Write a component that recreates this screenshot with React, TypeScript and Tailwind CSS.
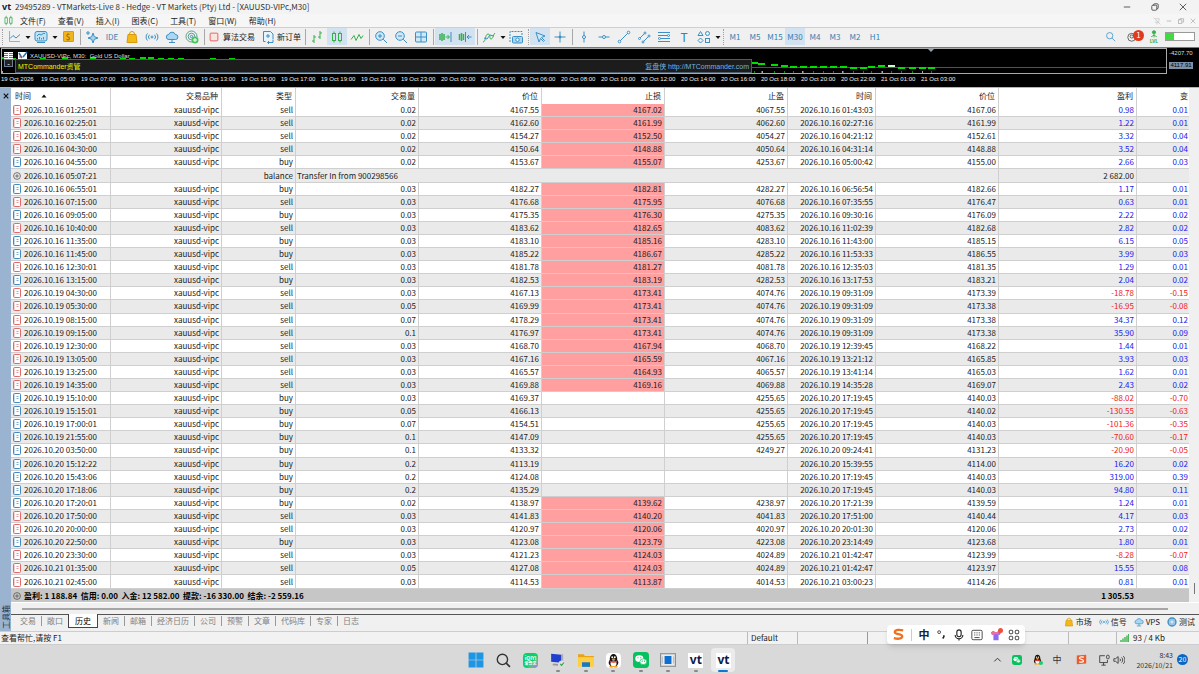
import React from 'react'

type Row = {
  open: string
  side: string
  volume: string
  price: string
  sl: string
  hit: boolean
  tp: string
  close: string
  closePrice: string
  profit: string
  change: string
}

const RAW = `
10.16 01:25:01|sell|0.02|4167.55|4167.02|4067.55|10.16 01:43:03|4167.06|0.98|0.01
10.16 02:25:01|sell|0.02|4162.60|4161.99|4062.60|10.16 02:27:16|4161.99|1.22|0.01
10.16 03:45:01|sell|0.02|4154.27|4152.50|4054.27|10.16 04:21:12|4152.61|3.32|0.04
10.16 04:30:00|sell|0.02|4150.64|4148.88|4050.64|10.16 04:31:14|4148.88|3.52|0.04
10.16 04:55:00|buy|0.02|4153.67|4155.07|4253.67|10.16 05:00:42|4155.00|2.66|0.03
10.16 05:07:21|balance|Transfer In from 900298566|||||| 2 682.00|
10.16 06:55:01|buy|0.03|4182.27|4182.81|4282.27|10.16 06:56:54|4182.66|1.17|0.01
10.16 07:15:00|sell|0.03|4176.68|4175.95|4076.68|10.16 07:35:55|4176.47|0.63|0.01
10.16 09:05:00|buy|0.03|4175.35|4176.30|4275.35|10.16 09:30:16|4176.09|2.22|0.02
10.16 10:40:00|sell|0.03|4183.62|4182.65|4083.62|10.16 11:02:39|4182.68|2.82|0.02
10.16 11:35:00|buy|0.03|4183.10|4185.16|4283.10|10.16 11:43:00|4185.15|6.15|0.05
10.16 11:45:00|buy|0.03|4185.22|4186.67|4285.22|10.16 11:53:33|4186.55|3.99|0.03
10.16 12:30:01|sell|0.03|4181.78|4181.27|4081.78|10.16 12:35:03|4181.35|1.29|0.01
10.16 13:15:00|buy|0.03|4182.53|4183.19|4282.53|10.16 13:17:53|4183.21|2.04|0.02
10.19 04:30:00|sell|0.03|4167.13|4173.41|4074.76|10.19 09:31:09|4173.39|-18.78|-0.15
10.19 05:30:00|sell|0.05|4169.99|4173.41|4074.76|10.19 09:31:09|4173.38|-16.95|-0.08
10.19 08:15:00|sell|0.07|4178.29|4173.41|4074.76|10.19 09:31:09|4173.38|34.37|0.12
10.19 09:15:00|sell|0.1|4176.97|4173.41|4074.76|10.19 09:31:09|4173.38|35.90|0.09
10.19 12:30:00|sell|0.03|4168.70|4167.94|4068.70|10.19 12:39:45|4168.22|1.44|0.01
10.19 13:05:00|sell|0.03|4167.16|4165.59|4067.16|10.19 13:21:12|4165.85|3.93|0.03
10.19 13:25:00|sell|0.03|4165.57|4164.93|4065.57|10.19 13:41:14|4165.03|1.62|0.01
10.19 14:35:00|sell|0.03|4169.88|4169.16|4069.88|10.19 14:35:28|4169.07|2.43|0.02
10.19 15:10:00|buy|0.03|4169.37||4255.65|10.20 17:19:45|4140.03|-88.02|-0.70
10.19 15:15:01|buy|0.05|4166.13||4255.65|10.20 17:19:45|4140.02|-130.55|-0.63
10.19 17:00:01|buy|0.07|4154.51||4255.65|10.20 17:19:45|4140.03|-101.36|-0.35
10.19 21:55:00|buy|0.1|4147.09||4255.65|10.20 17:19:45|4140.03|-70.60|-0.17
10.20 03:50:00|buy|0.1|4133.32||4249.27|10.20 09:24:41|4131.23|-20.90|-0.05
10.20 15:12:22|buy|0.2|4113.19|||10.20 15:39:55|4114.00|16.20|0.02
10.20 15:43:06|buy|0.2|4124.08|||10.20 17:19:45|4140.03|319.00|0.39
10.20 17:18:06|buy|0.2|4135.29|||10.20 17:19:45|4140.03|94.80|0.11
10.20 17:20:01|buy|0.02|4138.97|4139.62|4238.97|10.20 17:21:39|4139.59|1.24|0.01
10.20 17:50:00|sell|0.03|4141.83|4140.20|4041.83|10.20 17:51:00|4140.44|4.17|0.03
10.20 20:00:00|sell|0.03|4120.97|4120.06|4020.97|10.20 20:01:30|4120.06|2.73|0.02
10.20 22:50:00|buy|0.03|4123.08|4123.79|4223.08|10.20 23:14:49|4123.68|1.80|0.01
10.20 23:30:00|sell|0.03|4121.23|4124.03|4024.89|10.21 01:42:47|4123.99|-8.28|-0.07
10.21 01:35:00|sell|0.05|4127.08|4124.03|4024.89|10.21 01:42:47|4123.97|15.55|0.08
10.21 02:45:00|sell|0.03|4114.53|4113.87|4014.53|10.21 03:00:23|4114.26|0.81|0.01
`

const rows: Row[] = RAW.trim().split('\n').map((line) => {
  const [open, side, volume, price, sl, tp, close, closePrice, profit, change] = line.split('|')
  return {
    open: '2026.' + open,
    side,
    volume,
    price,
    sl,
    hit: sl !== '',
    tp,
    close: close ? '2026.' + close : '',
    closePrice,
    profit: profit.trim(),
    change
  }
})

const BLUE = '#3b8fc4'
const GREEN = '#35b04a'

const Ico: React.FC<{ children: React.ReactNode; color?: string; size?: number; fill?: string }> = ({
  children,
  color = BLUE,
  size = 14,
  fill = 'none'
}) => (
  <svg width={size} height={size} viewBox="0 0 14 14" fill={fill} stroke={color} strokeWidth="1" className="shrink-0" aria-hidden="true">
    {children}
  </svg>
)

const Caret = () => (
  <svg width="6" height="6" viewBox="0 0 6 6" className="shrink-0" aria-hidden="true">
    <path d="M0.500 2h5L3 5z" fill="#111" />
  </svg>
)

const Bag: React.FC<{ size?: number }> = ({ size = 14 }) => (
  <Ico size={size} color="#d49a10">
    <path d="M4.500 5V4a2.500 2.500 0 0 1 5 0v1" />
    <path d="M3 4.500h8l1 8H2z" fill="#f5b916" />
  </Ico>
)

const Signal: React.FC<{ size?: number }> = ({ size = 14 }) => (
  <Ico size={size}>
    <circle cx="7" cy="7" r="1" />
    <path d="M4.500 4.800a3 3 0 0 0 0 4.400M9.500 4.800a3 3 0 0 1 0 4.400M2.500 3.500a5 5 0 0 0 0 7M11.500 3.500a5 5 0 0 1 0 7" />
  </Ico>
)

const CloudIcon: React.FC<{ size?: number }> = ({ size = 14 }) => (
  <Ico size={size}>
    <path d="M4 9.500a2.500 2.500 0 0 1-.3-5A3.500 3.500 0 0 1 10.300 4.500 2.500 2.500 0 0 1 10.500 9.500z" fill="#a9d6f2" />
    <path d="M7 9.500v3M4 12.500h6" />
  </Ico>
)

const Tool: React.FC<{ label: string; active?: boolean; children: React.ReactNode }> = ({ label, active, children }) => (
  <button
    aria-label={label}
    className={`flex h-[17px] w-5 shrink-0 items-center justify-center text-[8px] text-[#3580b0] ${active ? 'bg-[#d3e2f0]' : ''}`}
  >
    {children}
  </button>
)

const DropTool: React.FC<{ label: string; children: React.ReactNode }> = ({ label, children }) => (
  <button aria-label={label} className="flex h-[17px] w-[27px] shrink-0 items-center pl-[3px]">
    {children}
    <span className="ml-1"><Caret /></span>
  </button>
)

const Sep = () => (
  <div className="flex h-4 w-1 shrink-0 justify-center">
    <div className="w-px bg-[#a8a8a8]" />
  </div>
)

const Grip = () => (
  <div className="flex h-4 w-1 shrink-0 justify-center">
    <div className="border-l border-dotted border-[#a0a0a0]" />
  </div>
)

const VtLogo: React.FC<{ className: string }> = ({ className }) => (
  <span className={`font-bold text-[#0d1b4b] ${className}`}>vt</span>
)

const TitleBar = () => (
  <header className="flex h-[14px] shrink-0 items-center bg-[#f3f3f3] pl-[2px] text-[8px] text-[#333]">
    <VtLogo className="w-[13px] font-['Noto_Sans',sans-serif] text-[9px] leading-3" />
    <h1>29495289 - VTMarkets-Live 8 - Hedge - VT Markets (Pty) Ltd - [XAUUSD-VIPc,M30]</h1>
    <div className="ml-auto flex items-center pr-[2px]">
      <button aria-label="最小化" className="flex w-7 justify-center">
        <Ico size={10} color="#222"><path d="M2.500 7h9" /></Ico>
      </button>
      <button aria-label="还原" className="flex w-7 justify-center">
        <Ico size={10} color="#222">
          <rect x="2.500" y="4.500" width="7" height="7" rx="1.500" />
          <path d="M5 4.500V4a1.500 1.500 0 0 1 1.500-1.500h3.500A1.500 1.500 0 0 1 11.500 4v4A1.500 1.500 0 0 1 10 9.500" />
        </Ico>
      </button>
      <button aria-label="关闭" className="flex w-7 justify-center">
        <Ico size={10} color="#222"><path d="M2.500 2.500l9 9M11.500 2.500l-9 9" /></Ico>
      </button>
    </div>
  </header>
)

const menus = ['文件(F)', '查看(V)', '插入(I)', '图表(C)', '工具(T)', '窗口(W)', '帮助(H)']

const MenuBar = () => (
  <nav className="flex h-[13px] shrink-0 items-center bg-[#f6f6f6] pl-[3px] text-[8px] text-[#222]">
    <Ico size={11} color={GREEN}>
      <path d="M4 1v12M10 1v12" />
      <rect x="2.500" y="3.500" width="3" height="7" fill="#f6f6f6" />
      <rect x="8.500" y="3.500" width="3" height="7" fill="#f6f6f6" />
    </Ico>
    <div className="ml-[6px] flex gap-3">
      {menus.map((m) => (
        <button key={m} className="leading-3">{m}</button>
      ))}
    </div>
    <div className="ml-auto flex items-center gap-1 pr-[2px]">
      <Ico size={8} color="#bbb"><path d="M1 1l12 12M4 3h7l-1 5M3 9h8M7 9v4" /></Ico>
      <Ico size={8} color="#999"><path d="M3 7h8" /></Ico>
      <Ico size={8} color="#999"><rect x="2.500" y="5" width="6" height="6" /><path d="M5 5V3h6.500v6H9" /></Ico>
      <Ico size={8} color="#999"><path d="M3 3l8 8M11 3l-8 8" /></Ico>
    </div>
  </nav>
)

const timeframes = ['M1', 'M5', 'M15', 'M30', 'M4', 'M3', 'M2', 'H1']

const Toolbar = () => (
  <div className="flex h-5 shrink-0 items-center border-t border-[#cfcfcf] bg-[#f0f0f0] pb-[2px]">
    <Grip />
    <DropTool label="图表类型">
      <Ico><path d="M2.500 1v10.500H13" stroke="#aaa" /><path d="M3 8.500l3-3 3 2.500 4-3.500" /></Ico>
    </DropTool>
    <DropTool label="图表">
      <Ico>
        <rect x="1" y="1.500" width="12" height="9.500" rx="2" fill="#bfe2f5" />
        <path d="M3 6l2-2 2 1 3-2 1 1" />
        <path d="M3.500 9.500V8M5.500 9.500V7M7.500 9.500V8M9.500 9.500V7" stroke={GREEN} />
        <path d="M3 12.500h8" />
      </Ico>
    </DropTool>
    <Tool label="市场报价">
      <span className="h-[11px] w-[11px] rounded-[1px] border border-[#d79b12] bg-[#f0b41c] text-center text-[8px] leading-[9px] text-[#7a5000]">$</span>
    </Tool>
    <Sep />
    <Tool label="智能助手">
      <Ico><path d="M8 3l1.300 3.700L13 8 9.300 9.300 8 13 6.700 9.300 3 8l3.700-1.300z" fill="#a9d6f2" /><path d="M3 1v4M1 3h4" /></Ico>
    </Tool>
    <Tool label="IDE">IDE</Tool>
    <Tool label="商店"><Bag /></Tool>
    <Tool label="信号"><Signal /></Tool>
    <Tool label="VPS"><CloudIcon /></Tool>
    <Tool label="网络">
      <Ico>
        <circle cx="6.500" cy="6.500" r="5.500" stroke="#5a9f8c" /><circle cx="6.500" cy="6.500" r="3.300" stroke="#5a9f8c" /><circle cx="6.500" cy="6.500" r="1.200" />
        <circle cx="10" cy="10" r="3.500" fill="#4cc35e" stroke="none" /><path d="M8 10h4M10 8v4" stroke="#fff" />
      </Ico>
    </Tool>
    <Sep />
    <button className="flex w-[52px] shrink-0 items-center gap-[3px] pl-[2px] text-[8px] text-[#222]">
      <Ico size={12} color="#e0524a"><rect x="2.500" y="2.500" width="9" height="9" rx="1" fill="#fbe5e3" /></Ico>
      算法交易
    </button>
    <button className="flex w-[45px] shrink-0 items-center gap-[2px] pl-[3px] text-[8px] text-[#222]">
      <Ico><path d="M4.500 11.500h-2v-10h7l2.500 2.500v5" fill="#e8f4fb" /><path d="M7 4v4M5 6h4" /><path d="M12 9.500v3H6.500M8 11l-1.500 1.500L8 14" /></Ico>
      新订单
    </button>
    <Sep />
    <Tool label="柱状图"><Ico color={GREEN}><path d="M4 5v8M2 11h2M4 7h2M10 1v8M8 7h2M10 3h2" /></Ico></Tool>
    <Tool label="蜡烛图" active>
      <Ico color={GREEN}><path d="M4 1.500v11M10 1.500v11" /><rect x="2.500" y="3.500" width="3" height="7" fill="#d3e2f0" /><rect x="8.500" y="3.500" width="3" height="7" fill="#d3e2f0" /></Ico>
    </Tool>
    <Tool label="线形图"><Ico color={GREEN}><path d="M1 9.500l3-4 2 5 3-6 2 4 2-3" /></Ico></Tool>
    <Sep />
    <Tool label="放大"><Ico><circle cx="6" cy="6" r="4.300" fill="#cfe8f7" /><path d="M9.200 9.200L13 13M4 6h4M6 4v4" /></Ico></Tool>
    <Tool label="缩小"><Ico><circle cx="6" cy="6" r="4.300" fill="#cfe8f7" /><path d="M9.200 9.200L13 13M4 6h4" /></Ico></Tool>
    <Tool label="平铺窗口"><Ico><rect x="1.500" y="2" width="11" height="10" rx="1" fill="#cfe8f7" /><path d="M7 2v10M1.500 7h11" /></Ico></Tool>
    <Sep />
    <Tool label="自动滚动" active><Ico><path d="M2 4v6M4 3v8M6 4v6" stroke={GREEN} strokeWidth="1.500" /><path d="M7.500 7H11M9.500 5l2 2-2 2" stroke={GREEN} /><path d="M13 2v10" /></Ico></Tool>
    <Tool label="图表平移" active><Ico><path d="M1.500 4v6M3.500 3v8M5.500 4v6" stroke={GREEN} strokeWidth="1.500" /><path d="M7.500 2v10M9 7h4.500M11 5L9 7l2 2" /></Ico></Tool>
    <Sep />
    <DropTool label="指标"><Ico><path d="M1 12c3 0 2-8 5-8s1 5 3 5 2-4 4-6" stroke={GREEN} /><path d="M2 8l3 1 3-4 4 1" /></Ico></DropTool>
    <Tool label="截图"><Ico><path d="M1 12V1.500h12V5" strokeDasharray="2 1" /><rect x="3.500" y="6.500" width="10" height="6.500" rx="1" fill="#a9d6f2" /><circle cx="8.500" cy="9.800" r="1.700" fill="#fff" /></Ico></Tool>
    <Grip />
    <Tool label="光标" active><Ico><path d="M3 2.500l9 3.500-3.500 1.500 3 3-1 1-3-3L6 12z" fill="#cfe8f7" /></Ico></Tool>
    <Tool label="十字线"><Ico><path d="M7 1.500v11M1.500 7h11" /><circle cx="7" cy="7" r="1" fill={BLUE} /></Ico></Tool>
    <Sep />
    <Tool label="垂直线"><Ico><path d="M7 1.500v11" /><circle cx="7" cy="7" r="1.500" fill="#fff" /></Ico></Tool>
    <Tool label="水平线"><Ico><path d="M1.500 7h11" /><circle cx="7" cy="7" r="1.500" fill="#fff" /></Ico></Tool>
    <Tool label="趋势线"><Ico><path d="M2.500 11.500l9-9" /><circle cx="2.500" cy="11.500" r="1.300" fill="#fff" /><circle cx="11.500" cy="2.500" r="1.300" fill="#fff" /></Ico></Tool>
    <Tool label="通道"><Ico><path d="M2 9l6-6M6 12l6-6" /><circle cx="2.500" cy="8.500" r="1" fill="#fff" /><circle cx="8" cy="3" r="1" fill="#fff" /><circle cx="6" cy="12" r="1" fill="#fff" /><circle cx="12" cy="6" r="1" fill="#fff" /></Ico></Tool>
    <Tool label="斐波那契"><Ico><path d="M1 2.500h12M1 5.500h12M1 8.500h12M1 11.500h12" /><circle cx="2.500" cy="8.500" r="1" fill="#fff" /><circle cx="11.500" cy="5.500" r="1" fill="#fff" /></Ico></Tool>
    <Tool label="文本"><span className="text-[12px] leading-none">T</span></Tool>
    <DropTool label="图形"><Ico><path d="M3.500 1.500l2.500 4H1z" /><circle cx="10.500" cy="3.500" r="2" /><path d="M3.500 8L6 10.500 3.500 13 1 10.500z" /><rect x="8.500" y="8.500" width="4" height="4" /></Ico></DropTool>
    <Grip />
    {timeframes.map((t) => (
      <Tool key={t} label={t} active={t === 'M30'}>{t}</Tool>
    ))}
    <div className="ml-auto flex items-center pr-1">
      <Tool label="搜索"><Ico size={11}><circle cx="6" cy="6" r="4" /><path d="M9 9l4 4" /></Ico></Tool>
      <button aria-label="通知" className="relative flex h-4 w-6 items-center justify-center">
        <Ico size={11} color="#444"><circle cx="6" cy="8" r="5" /><circle cx="6" cy="7" r="2" /></Ico>
        <span className="absolute right-0 top-px flex h-[11px] w-[11px] items-center justify-center rounded-full bg-[#e03a1e] text-[8px] leading-none text-white">1</span>
      </button>
      <button aria-label="等级" className="flex w-5 flex-col items-center">
        <Ico color={GREEN} size={8}><circle cx="7" cy="4" r="3" fill={GREEN} /><path d="M7 7v6M2 12l5-3 5 3" strokeWidth="1.500" /></Ico>
        <span className="text-[5px] font-bold leading-[5px] text-[#2fa84a]">LVL</span>
      </button>
      <div className="ml-px h-[9px] w-[30px] border border-[#999] bg-white">
        <div className="h-full w-2 bg-[#3fdc3f]" />
      </div>
    </div>
  </div>
)

const axis = [
  '19 Oct 2026', '19 Oct 05:00', '19 Oct 07:00', '19 Oct 09:00', '19 Oct 11:00', '19 Oct 13:00', '19 Oct 15:00', '19 Oct 17:00',
  '19 Oct 19:00', '19 Oct 21:00', '19 Oct 23:00', '20 Oct 02:00', '20 Oct 04:00', '20 Oct 06:00', '20 Oct 08:00', '20 Oct 10:00',
  '20 Oct 12:00', '20 Oct 14:00', '20 Oct 16:00', '20 Oct 18:00', '20 Oct 20:00', '20 Oct 22:00', '21 Oct 01:00', '21 Oct 03:00'
]

// candle bodies as [x, y] inside the plot
const candles = [
  [749, 13], [756, 14], [769, 15], [779, 16], [788, 17], [798, 17], [808, 17], [818, 17], [828, 17],
  [838, 17], [848, 18], [858, 18], [866, 17], [876, 16], [886, 16], [896, 18], [907, 18], [917, 18], [926, 18]
]
const earlyCandles = [[0, 8], [8, 9], [38, 9], [60, 8], [88, 8], [118, 9], [127, 9], [138, 8], [146, 8], [156, 9], [166, 9], [176, 9], [208, 9], [227, 9]]

const Chart = () => (
  <section className="h-10 shrink-0 border-t border-[#777] bg-black font-['Liberation_Sans','Noto_Sans_CJK_SC',sans-serif]">
    <div className="flex h-[26px]">
      <div className="relative ml-px min-w-0 flex-1 overflow-hidden border border-[#aaa]">
        <svg width="1165" height="24" className="block" aria-hidden="true">
          <path d="M750 18.500h415" stroke="#4a5560" />
          {earlyCandles.map(([x, y]) => (
            <rect key={x} x={x} y={y} width="6" height="2" fill="#00d800" />
          ))}
          {candles.map(([x, y]) => (
            <g key={x}>
              <rect x={x} y={y} width="7" height="2" fill="#00e000" />
              <path d={`M${x + 3.5} 22v2`} stroke="#0a8a0a" />
            </g>
          ))}
          <rect x="886" y="16" width="7" height="2" fill="#c8ffc8" />
          <path d="M926 0h6l-3 3z" fill="#8aa0b8" />
          <rect x="2" y="3" width="9" height="7" fill="#fff" />
          <path d="M2 4.500h4M2 6.500h4M2 8.500h4" stroke="#e0483c" />
          <path d="M7 4.500h4M7 6.500h4M7 8.500h4" stroke="#3a80c8" />
          <rect x="16" y="3" width="9" height="7" fill="#fff" />
          <path d="M17 4l3 5M21 8l4-5" stroke="#2a6fb0" strokeWidth="1.500" />
          <path d="M17 8h3" stroke="#e0483c" />
          {axis.map((_, i) => (
            <path key={i} d={`M${i * 40 + 0.5} 22v2`} stroke="#aaa" />
          ))}
        </svg>
        <div className="absolute left-7 top-[3px] whitespace-nowrap text-[6px] leading-[8px] text-[#ddd]">XAUUSD-VIPc, M30: &nbsp;Gold US Dollar</div>
        <div className="absolute left-0 top-[10px] flex w-[750px] items-start">
          <button aria-label="收起" className="mx-[2px] h-2 w-[9px] border border-[#6a7f96] bg-[#222] text-[8px] leading-[5px] text-white">-</button>
          <div className="flex h-[14px] flex-1 items-center justify-between border border-[#4c5d70] bg-[#1c1c1c] pl-[2px] pr-[2px] text-[7px] leading-[9px]">
            <span className="text-[#f0f000]">MTCommander资管</span>
            <a href="#" className="text-[#6fb3e0]">复盘侠 http://MTCommander.com</a>
          </div>
        </div>
      </div>
      <div className="flex w-8 shrink-0 flex-col gap-[5px] pl-[2px] text-[6px] leading-[8px] text-[#ddd]">
        <span className="pt-px">-4207.70</span>
        <span className="h-[7px] w-6 bg-[#7d92a8] text-center leading-[7px] text-black">4117.91</span>
      </div>
    </div>
    <div className="ml-px flex overflow-hidden text-[6px] leading-[10px] text-[#f0f0f0]">
      {axis.map((t, i) => (
        <span key={i} className="w-10 shrink-0 whitespace-nowrap">{t}</span>
      ))}
    </div>
  </section>
)

const DocIcon: React.FC<{ side: string }> = ({ side }) => {
  if (side === 'balance') {
    return (
      <svg width="8" height="10" viewBox="0 0 8 10" fill="none" stroke="#555" aria-hidden="true">
        <circle cx="4" cy="5" r="3.400" strokeWidth="0.800" />
        <path d="M4 3.200v3.600M2.200 5h3.600" strokeWidth="0.800" />
      </svg>
    )
  }
  const color = side === 'buy' ? '#4189c0' : '#e0696a'
  return (
    <svg width="8" height="10" viewBox="0 0 8 10" fill="none" stroke={color} aria-hidden="true">
      <rect x="0.500" y="0.500" width="7" height="9" rx="1" fill="#fff" />
      <path d="M1.500 1v8" opacity="0.300" />
      <path d="M3.500 3.500h2M3.500 5.500h2" opacity="0.700" />
    </svg>
  )
}

const heads = ['时间', '交易品种', '类型', '交易量', '价位', '止损', '止盈', '时间', '价位', '盈利', '变']
const cell = 'border-r border-b border-[#cfcfcf] px-[2px] text-right'

const HistoryTable = () => (
  <table className="h-full w-full table-fixed border-separate border-spacing-0 whitespace-nowrap text-[8px] leading-3 text-[#222]">
    <colgroup>
      <col className="w-[100px]" />
      <col className="w-[111px]" />
      <col className="w-[74px]" />
      <col className="w-[123px]" />
      <col className="w-[123px]" />
      <col className="w-[123px]" />
      <col className="w-[123px]" />
      <col className="w-[88px]" />
      <col className="w-[123px]" />
      <col className="w-[138px]" />
      <col className="w-[52px]" />
    </colgroup>
    <thead>
      <tr className="h-4">
        {heads.map((h, i) => (
          <th key={i} className={`border-r border-[#cfcfcf] font-normal ${i === 0 ? 'pl-1 text-left' : i === 10 ? 'border-r-0 pr-px text-right' : 'pr-[3px] text-right'}`}>
            {i === 0 ? (
              <button className="flex items-center gap-[10px]">
                {h}
                <svg width="6" height="4" viewBox="0 0 6 4" aria-hidden="true"><path d="M0.500 3.500h5L3 0.500z" fill="#111" /></svg>
              </button>
            ) : h}
          </th>
        ))}
      </tr>
    </thead>
    <tbody>
      {rows.map((r) => {
        const tone = r.profit.startsWith('-') ? 'text-[#f02020]' : 'text-[#2020f0]'
        const isBalance = r.side === 'balance'
        return (
          <tr key={r.open} className="even:bg-[#eaeaea]">
            <td className="border-r border-b border-[#cfcfcf] pl-[2px]">
              <div className="flex h-3 items-center gap-[3px]">
                <DocIcon side={r.side} />
                {r.open}
              </div>
            </td>
            <td className={cell}>{isBalance ? '' : 'xauusd-vipc'}</td>
            <td className={cell}>{r.side}</td>
            {isBalance ? (
              <td colSpan={6} className="border-r border-b border-[#cfcfcf] px-px">{r.volume}</td>
            ) : (
              <>
                <td className={cell}>{r.volume}</td>
                <td className={cell}>{r.price}</td>
                <td className={`${cell} ${r.hit ? 'bg-[#ff9f9f]' : ''}`}>{r.sl}</td>
                <td className={cell}>{r.tp}</td>
                <td className={cell}>{r.close}</td>
                <td className={cell}>{r.closePrice}</td>
              </>
            )}
            <td className={`${cell} ${isBalance ? '' : tone}`}>{r.profit}</td>
            <td className={`border-b border-[#cfcfcf] pr-px text-right ${tone}`}>{r.change}</td>
          </tr>
        )
      })}
    </tbody>
    <tfoot>
      <tr className="h-[13px] bg-[#c6c6c6] font-bold text-black">
        <td colSpan={9} className="pl-[2px]">
          <div className="flex h-3 items-center gap-[3px]">
            <DocIcon side="balance" />
            <span className="whitespace-pre">盈利: 1 188.84  信用: 0.00  入金: 12 582.00  提款: -16 330.00  结余: -2 559.16</span>
          </div>
        </td>
        <td className="pr-[3px] text-right">1 305.53</td>
        <td />
      </tr>
    </tfoot>
  </table>
)

const tabs = ['交易', '敞口', '历史', '新闻', '邮箱', '经济日历', '公司', '预警', '文章', '代码库', '专家', '日志']

const Toolbox = () => (
  <section className="flex min-h-0 flex-1 border-t border-[#b5b5b5] bg-[#f0f0f0]">
    <aside className="flex w-[11px] shrink-0 flex-col items-center justify-between bg-[#9ab3d1] py-[2px]">
      <button aria-label="关闭工具箱" className="flex h-3 items-center">
        <Ico size={8} color="#111"><path d="M3 3l8 8M11 3l-8 8" strokeWidth="2" /></Ico>
      </button>
      <span className="rotate-180 text-[8px] leading-[10px] text-[#1c3450] [text-orientation:sideways] [writing-mode:vertical-rl]">工具箱</span>
    </aside>
    <div className="flex min-w-0 flex-1 flex-col">
      <div className="flex min-h-0 flex-1">
        <div className="min-w-0 flex-1 overflow-auto bg-white [scrollbar-width:none]">
          <HistoryTable />
        </div>
        <div className="flex w-[10px] shrink-0 items-end justify-center pb-2">
          <div className="h-[11px] w-px bg-[#777]" />
        </div>
      </div>
      <div className="flex h-3 shrink-0 items-center border-t border-white pl-[11px] pr-[31px]">
        <div className="h-[2px] flex-1 bg-[#a6a6a6]" />
      </div>
      <div className="flex h-[17px] shrink-0 items-start border-t border-[#555] text-[8px] leading-3 text-[#808080]">
        <div className="flex pl-1">
          {tabs.map((t, i) =>
            t === '历史' ? (
              <button key={t} className="-mt-px h-[14px] border border-t-0 border-[#444] bg-white px-[6px] text-black">{t}</button>
            ) : (
              <button key={t} className="flex h-3 items-center">
                <span className="px-[5px]">{t}</span>
                {i !== 1 && i !== tabs.length - 1 && <span className="h-[10px] w-px bg-[#999]" />}
              </button>
            )
          )}
        </div>
        <div className="ml-auto flex items-center gap-[7px] pr-1 pt-px text-[#222]">
          <a href="#" className="flex items-center gap-[2px]"><Bag size={10} />市场</a>
          <a href="#" className="flex items-center gap-[2px]"><Signal size={10} />信号</a>
          <a href="#" className="flex items-center gap-[2px]"><CloudIcon size={10} />VPS</a>
          <a href="#" className="flex items-center gap-[2px]">
            <Ico size={10}><circle cx="7" cy="7" r="5.500" strokeWidth="2" /><rect x="4" y="4" width="6" height="6" rx="1" fill="#cfe8f7" /></Ico>
            测试
          </a>
        </div>
      </div>
    </div>
  </section>
)

const ImeBar = () => (
  <div className="absolute right-[174px] top-[-7px] flex h-[19px] w-[138px] items-center justify-between rounded bg-white px-[5px] text-[#222] shadow-md">
    <Ico size={13} color="#f36f1c"><path d="M12 2.500C8 1.500 3 1.800 3 4.500s8 1.500 8 4.500-5 3-9 2" strokeWidth="2.500" /></Ico>
    <span className="h-3 w-px bg-[#ccc]" />
    <button className="text-[11px] font-bold leading-none">中</button>
    <button aria-label="标点" className="flex">
      <Ico size={11} color="#222"><circle cx="4" cy="4" r="1.800" /><path d="M10 8v2l-1.500 2" strokeWidth="2" /></Ico>
    </button>
    <button aria-label="语音" className="flex">
      <Ico size={12} color="#222"><rect x="4.500" y="1" width="5" height="8" rx="2.500" strokeWidth="1.300" /><path d="M2.500 7a4.500 4.500 0 0 0 9 0M7 11.500v2" strokeWidth="1.300" /></Ico>
    </button>
    <button aria-label="键盘" className="flex">
      <Ico size={12} color="#333"><rect x="1" y="1.500" width="12" height="11" rx="1.500" /><path d="M3.500 4.500h7M3.500 7h7" strokeDasharray="1 1" /><path d="M4 10h6" /></Ico>
    </button>
    <button aria-label="皮肤" className="relative flex">
      <Ico size={12} color="none"><path d="M1 4l3-2c1 2 5 2 6 0l3 2-1.500 3L10 6.500V13H4V6.500L2.500 7z" fill="#8c6cf0" /><path d="M1 4l3-2c1 2 5 2 6 0v4H4l-1.500 1z" fill="#f0709a" /></Ico>
      <span className="absolute -right-px -top-px h-[5px] w-[5px] rounded-full bg-[#f2503c]" />
    </button>
    <button aria-label="工具" className="flex">
      <Ico size={12} color="#222"><rect x="1.500" y="1.500" width="4" height="4" rx="1" /><rect x="8.500" y="1.500" width="4" height="4" rx="1" /><rect x="1.500" y="8.500" width="4" height="4" rx="1" /><rect x="8.500" y="8.500" width="4" height="4" rx="1" /></Ico>
    </button>
  </div>
)

const StatusBar = () => (
  <footer className="relative flex h-[14px] shrink-0 items-center border-y border-[#cdcdcd] bg-[#f2f2f2] text-[8px] leading-3 text-[#222]">
    <span className="flex-1 pl-[1px]">查看帮忙,请按 F1</span>
    <span className="w-[50px] border-l border-[#bbb] pl-[3px]">Default</span>
    <span className="h-3 w-[70px] border-l border-[#bbb]" />
    <span className="h-3 w-[201px] border-l border-[#999]" />
    <span className="h-3 w-12 border-l border-[#bbb]" />
    <span className="flex w-[83px] items-center gap-1 border-l border-[#bbb] pl-[3px]">
      <svg width="9" height="8" viewBox="0 0 9 8" aria-hidden="true"><path d="M1 8V6M3 8V4.500M5 8V3M7 8V1.500M8.800 8V0" stroke="#2fae3f" strokeWidth="1.300" /></svg>
      93 / 4 Kb
    </span>
    <ImeBar />
  </footer>
)

const QQ: React.FC<{ size: number }> = ({ size }) => (
  <Ico size={size} color="none">
    <ellipse cx="7" cy="5.500" rx="3.500" ry="4.500" fill="#111" />
    <ellipse cx="7" cy="9" rx="4.500" ry="3.800" fill="#111" />
    <ellipse cx="7" cy="9.800" rx="2.800" ry="2.900" fill="#fff" />
    <circle cx="5.800" cy="4" r="0.900" fill="#fff" />
    <circle cx="8.200" cy="4" r="0.900" fill="#fff" />
    <ellipse cx="7" cy="5.800" rx="1.800" ry="0.700" fill="#f5a623" />
    <path d="M3.500 7c2 1 5 1 7 0v1.500c-2 .8-5 .8-7 0z" fill="#e0342a" />
    <ellipse cx="5" cy="12.800" rx="2" ry="0.900" fill="#f5a623" />
    <ellipse cx="9" cy="12.800" rx="2" ry="0.900" fill="#f5a623" />
  </Ico>
)

const WeChat: React.FC<{ size: number }> = ({ size }) => (
  <Ico size={size} color="none">
    <rect width="14" height="14" rx="3" fill="#07c160" />
    <ellipse cx="5.500" cy="5.800" rx="3.500" ry="2.900" fill="#fff" />
    <ellipse cx="9" cy="8.500" rx="3" ry="2.500" fill="#fff" stroke="#07c160" strokeWidth="0.600" />
    <path d="M4.300 5h.1M6.700 5h.1" stroke="#07c160" strokeLinecap="round" />
    <path d="M8 8h.1M10 8h.1" stroke="#07c160" strokeLinecap="round" />
  </Ico>
)

const vtTile = "h-[15px] w-[15px] bg-white text-center font-['Noto_Sans',sans-serif] text-[12px] leading-[13px]"

const apps = [
  {
    name: '开始',
    icon: <Ico size={16} color="none"><path d="M.5.5h6.200v6.200H.5zM7.300.5h6.200v6.200H7.300zM.5 7.300h6.200v6.200H.5zM7.300 7.300h6.200v6.200H7.300z" fill="#1e96e4" /></Ico>
  },
  { name: '搜索', icon: <Ico size={15} color="#333"><circle cx="6" cy="6" r="4.800" strokeWidth="1.300" /><path d="M9.500 9.500l3.500 3.500" strokeWidth="1.500" /></Ico> },
  {
    name: '爱奇艺',
    icon: (
      <span className="flex h-[15px] w-[15px] flex-col items-center justify-center rounded bg-linear-to-br from-[#0bd06a] from-60% to-[#a070e0] text-[5px] font-bold leading-[6px] text-white">
        <span>iQIYI</span>
        <span className="text-[4px] leading-[5px]">爱奇艺</span>
      </span>
    )
  },
  {
    name: '远程桌面',
    icon: (
      <Ico size={16} color="none">
        <path d="M1 1.500l9 1v7l-9-1z" fill="#1f3fd0" /><path d="M10 2.500l1.500-1v7L10 9.500z" fill="#aab" />
        <path d="M3 10l4 .5v1.500L2 11.500z" fill="#999" /><circle cx="10.500" cy="10.500" r="3" fill="#ddd" /><path d="M9 10.500l1.200 1.200 2-2.500" stroke="#2fa84a" />
      </Ico>
    )
  },
  {
    name: '文件资源管理器',
    icon: <Ico size={16} color="none"><path d="M0 2h5l1 1.500h8V12H0z" fill="#e8a317" /><path d="M0 4.500h14V13H0z" fill="#fccf45" /><path d="M3.500 9h7v4h-7z" fill="#1878c8" /></Ico>
  },
  { name: 'QQ', icon: <span className="rounded bg-white"><QQ size={15} /></span> },
  { name: '微信', icon: <WeChat size={16} /> },
  {
    name: '虚拟机',
    icon: <Ico size={16} color="#8a8f96"><rect x=".5" y="1.500" width="13" height="11" fill="#e8eaec" /><path d="M4 3.500h6v7H4z" fill="#0a6fd0" stroke="none" /><path d="M2 4v6M12 4v6" stroke="#bbb" /></Ico>
  },
  { name: 'VT Markets 1', icon: <VtLogo className={vtTile} /> },
  { name: 'VT Markets 2', icon: <VtLogo className={vtTile} /> }
]

const Taskbar = () => (
  <div className="grid h-[29px] shrink-0 grid-cols-[1fr_auto_1fr] items-center bg-[#d9d9d9]">
    <div />
    <div className="flex w-[272px] justify-between">
      {apps.map((a, i) => (
        <button
          key={a.name}
          aria-label={a.name}
          className={`flex h-6 w-6 flex-col items-center justify-end gap-[2px] rounded-sm ${i === 9 ? 'bg-[#ebebeb]' : ''}`}
        >
          {a.icon}
          <span className={`h-[2px] rounded-full ${i === 9 ? 'w-[10px] bg-[#0a78d4]' : i > 2 ? 'w-1 bg-[#888]' : 'w-1'}`} />
        </button>
      ))}
    </div>
    <div className="flex items-center justify-end pr-[11px] text-[#333]">
      <button aria-label="显示隐藏的图标" className="flex w-5 justify-center"><Ico size={9} color="#333"><path d="M2 10l5-5 5 5" strokeWidth="1.500" /></Ico></button>
      <button aria-label="微信托盘" className="flex w-5 justify-center"><WeChat size={10} /></button>
      <button aria-label="QQ托盘" className="relative flex w-5 justify-center">
        <QQ size={11} />
        <span className="absolute bottom-0 right-1 h-1 w-1 rounded-full bg-[#18d070]" />
      </button>
      <button className="w-5 text-[9px] leading-none">中</button>
      <button aria-label="搜狗输入法" className="flex w-7 justify-center">
        <Ico size={11} color="#fff"><path d="M1 2l12-1v11l-12 1z" fill="#ee5a2a" stroke="none" /><path d="M10 4C7 3 4 4 4.500 5.500S10 7 9.500 9 6 10.500 4 10" strokeWidth="1.500" /></Ico>
      </button>
      <button aria-label="网络" className="flex w-[18px] justify-center">
        <Ico size={12} color="#333"><path d="M8 2H2v8h9V7M4 13h5M6.500 10v3" /><rect x="10" y="1.500" width="3" height="4" rx="1" /></Ico>
      </button>
      <button aria-label="音量" className="flex w-3 justify-center">
        <Ico size={12} color="#333"><path d="M1 5.500h2L6 3v8L3 8.500H1zM8 5.500a2 2 0 0 1 0 3M10 4a4 4 0 0 1 0 6M12 2.500a6 6 0 0 1 0 9" /></Ico>
      </button>
      <div className="ml-2 w-10 text-right text-[7px] leading-[10px]">
        <div>8:43</div>
        <div>2026/10/21</div>
      </div>
      <span className="ml-1 flex h-[11px] w-[11px] items-center justify-center rounded-full bg-[#0a66c2] text-[7px] leading-none text-white">20</span>
    </div>
  </div>
)

const App: React.FC = () => {
  return (
    <div className="flex h-screen flex-col bg-[#f0f0f0] font-['Noto_Sans_CJK_SC','Noto_Sans',sans-serif]">
      <TitleBar />
      <MenuBar />
      <Toolbar />
      <Chart />
      <Toolbox />
      <StatusBar />
      <Taskbar />
    </div>
  )
}

export default App
